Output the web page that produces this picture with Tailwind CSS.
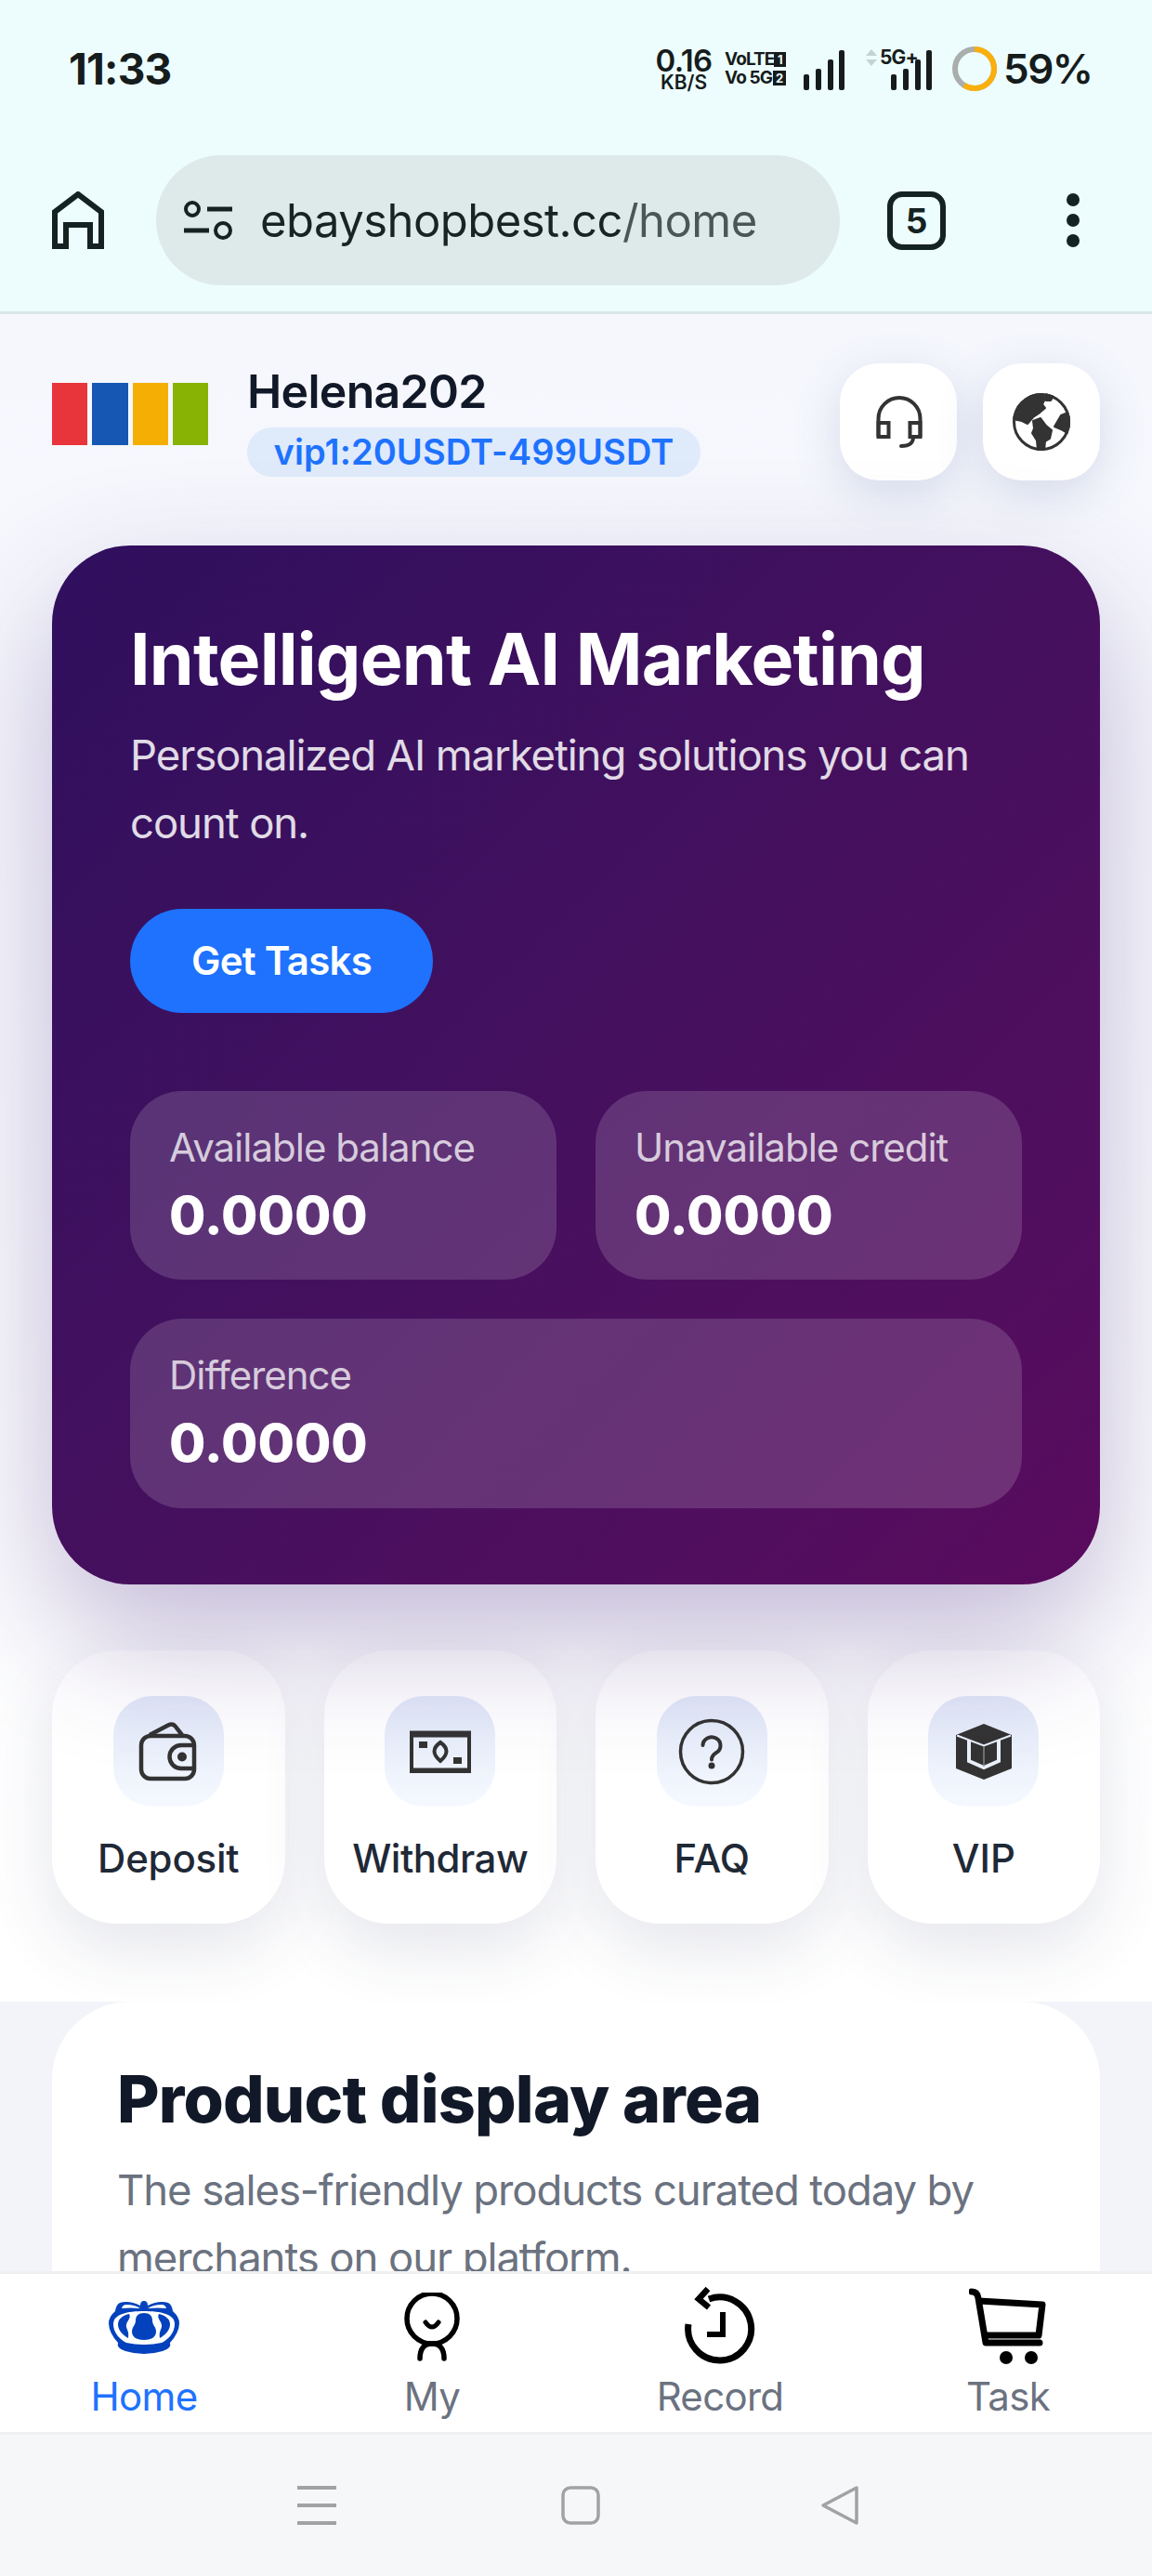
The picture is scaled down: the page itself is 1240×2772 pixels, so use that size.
<!DOCTYPE html>
<html lang="en">
<head>
<meta charset="utf-8">
<title>ebayshopbest</title>
<script src="https://cdn.jsdelivr.net/npm/@tailwindcss/browser@4"></script>
</head>
<body class="font-['Inter',sans-serif]">
<div class="w-[1240px] h-[2772px] overflow-hidden flex flex-col bg-white">

  <!-- browser chrome -->
  <header class="shrink-0 h-[338px] bg-[#edfdfd] border-b-[3px] border-[#d8e8e8] text-[#161c1c]">
    <div class="h-[148px] flex items-center pl-[74px] pr-[66px]">
      <span class="text-[46px] font-bold tracking-[-0.8px] leading-none">11:33</span>
      <div class="ml-auto flex items-center">
        <div class="w-[62px] flex flex-col items-center font-semibold">
          <span class="text-[33px] leading-[28px] tracking-[-0.6px]">0.16</span>
          <span class="text-[21px] leading-[18px] mt-[1px]">KB/S</span>
        </div>
        <div class="ml-[13px] w-[66px] flex flex-col font-bold text-[19px] leading-[20px] tracking-[-0.9px] whitespace-nowrap">
          <div class="flex items-center justify-between"><span>VoLTE</span><span class="w-[14px] h-[16px] bg-[#161c1c] text-[#edfdfd] text-[13px] leading-[16px] text-center tracking-normal">1</span></div>
          <div class="flex items-center justify-between"><span>Vo 5G</span><span class="w-[14px] h-[16px] bg-[#161c1c] text-[#edfdfd] text-[13px] leading-[16px] text-center tracking-normal">2</span></div>
        </div>
        <svg class="ml-[19px] mt-[2px]" width="44" height="44" viewBox="0 0 44 44" fill="#161c1c"><rect x="0" y="27" width="6" height="17" rx="2"/><rect x="13" y="21" width="6" height="23" rx="2"/><rect x="26" y="11" width="6" height="33" rx="2"/><rect x="38" y="1" width="6" height="43" rx="2"/></svg>
        <div class="relative ml-[23px] w-[71px] h-[44px] mt-[2px]">
          <svg class="absolute left-0 top-0" width="12" height="18" viewBox="0 0 12 18" fill="#c5d2d2"><path d="M6 0l6 7H0z"/><path d="M0 11h12l-6 7z"/></svg>
          <span class="absolute left-[15px] top-[-2px] text-[21px] leading-[22px] font-bold tracking-[-0.8px]">5G+</span>
          <svg class="absolute left-[27px] top-0" width="44" height="44" viewBox="0 0 44 44" fill="#161c1c"><rect x="0" y="27" width="6" height="17" rx="2"/><rect x="13" y="21" width="6" height="23" rx="2"/><rect x="26" y="11" width="6" height="33" rx="2"/><rect x="38" y="1" width="6" height="43" rx="2"/></svg>
        </div>
        <svg class="ml-[22px]" width="48" height="50" viewBox="0 0 48 50" fill="none"><circle cx="24" cy="25" r="21" stroke="#a9aeac" stroke-width="6"/><circle cx="24" cy="25" r="21" stroke="#fbaf0d" stroke-width="6" pathLength="100" stroke-dasharray="59 100" transform="rotate(-90 24 25)"/></svg>
        <span class="ml-[7px] w-[94px] text-[44px] font-semibold leading-none tracking-[-1.5px]">59%</span>
      </div>
    </div>
    <div class="flex items-start pt-[19px] pl-[56px]">
      <div class="h-[140px] flex items-center">
        <svg width="56" height="62" viewBox="0 0 56 62" fill="none" stroke="#142222" stroke-width="6"><path d="M3 59V22L28 3l25 19v37H41V36H15v23z"/></svg>
      </div>
      <div class="ml-[56px] w-[736px] h-[140px] rounded-full bg-[#deeae9] flex items-center pl-[30px]">
        <svg width="54" height="44" viewBox="0 0 54 44" fill="none" stroke="#142222"><circle cx="9" cy="10" r="7" stroke-width="4"/><path d="M25 10h27" stroke-width="5"/><path d="M0 33h27" stroke-width="5"/><circle cx="42" cy="33" r="8" stroke-width="4"/></svg>
        <span class="ml-[28px] text-[49px] leading-none tracking-[-0.55px] text-[#182423]">ebayshopbest.cc<span class="text-[#4b5756]">/home</span></span>
      </div>
      <div class="ml-[51px] h-[140px] flex items-center">
        <div class="w-[63px] h-[63px] rounded-[16px] border-[6px] border-[#142222] flex items-center justify-center text-[37px] font-bold leading-none text-[#142222]">5</div>
      </div>
      <div class="ml-[130px] h-[140px] flex flex-col items-center justify-center gap-[8px]">
        <span class="w-[14px] h-[14px] rounded-full bg-[#142222]"></span>
        <span class="w-[14px] h-[14px] rounded-full bg-[#142222]"></span>
        <span class="w-[14px] h-[14px] rounded-full bg-[#142222]"></span>
      </div>
    </div>
  </header>

  <!-- page -->
  <main class="flex-1 min-h-0 overflow-hidden">
    <section class="h-[1816px] bg-linear-to-b from-[#f5f7fd] to-white px-[56px] pt-[53px]">
      <div class="flex items-center h-[126px]">
        <div class="flex gap-[5px] w-[168px] h-[67px] mb-[17px]">
          <span class="flex-1 bg-[#e8343b]"></span>
          <span class="flex-1 bg-[#1757b4]"></span>
          <span class="flex-1 bg-[#f5ae03]"></span>
          <span class="flex-1 bg-[#89b304]"></span>
        </div>
        <div class="ml-[42px]">
          <div class="text-[50px] leading-[51px] font-semibold text-[#111827] tracking-[-0.7px]">Helena202</div>
          <div class="mt-[13px] h-[53px] w-[488px] rounded-full bg-[#dfeafb] flex items-center justify-center text-[38px] font-semibold text-[#1e72fe] tracking-[0.1px]">vip1:20USDT-499USDT</div>
        </div>
        <div class="ml-auto flex gap-[28px]">
          <div class="w-[126px] h-[126px] rounded-[42px] bg-white shadow-[0_14px_50px_rgba(70,90,150,0.18)] flex items-center justify-center">
            <svg width="60" height="60" viewBox="0 0 60 60" fill="none" stroke="#333" stroke-width="4"><path d="M8.5 46V26.5a22.5 22.5 0 0 1 45 0V46"/><rect x="8.5" y="31" width="11" height="15"/><rect x="42.5" y="31" width="11" height="15"/><path d="M46 46c0 7-4 10-13 10" stroke-linecap="round"/></svg>
          </div>
          <div class="w-[126px] h-[126px] rounded-[42px] bg-white shadow-[0_14px_50px_rgba(70,90,150,0.18)] flex items-center justify-center">
            <svg width="62" height="62" viewBox="0 0 62 62"><defs><clipPath id="globe"><circle cx="31" cy="31" r="31"/></clipPath></defs><circle cx="31" cy="31" r="29.5" fill="#fff" stroke="#333" stroke-width="3"/><g clip-path="url(#globe)" fill="#333" stroke="#333" stroke-width="2" stroke-linejoin="round"><path d="M0 28L6 12 20 2 32 0l3 6-3 6 3 4-7 6-6 4-6 7-6-3z"/><path d="M22 30l8-3 6 8 6 5-2 9-5 3-1 10h-7l-1-11-5-8 2-5z"/><path d="M62 20l-10 4-7 12 7 3 10 6z"/><path d="M36 1l8 2-3 5-5 0z"/></g></svg>
          </div>
        </div>
      </div>

      <div class="relative z-10 mt-[70px] h-[1118px] rounded-[84px] bg-linear-to-br from-[#2f0f5e] to-[#5a0b5e] px-[84px] pt-[84px] shadow-[0_56px_140px_rgba(60,25,120,0.3)]">
        <h1 class="text-[77px] leading-[77px] font-bold text-white tracking-[-0.8px]">Intelligent AI Marketing</h1>
        <p class="mt-[28px] text-[45.5px] leading-[73px] text-white/85 tracking-[-1.1px]">Personalized AI marketing solutions you can count on.</p>
        <div class="mt-[56px] w-[326px] h-[112px] pb-[2px] rounded-full bg-[#1e72fe] flex items-center justify-center text-[42px] font-semibold text-white tracking-[-0.7px]">Get Tasks</div>
        <div class="mt-[84px] grid grid-cols-2 gap-[42px]">
          <div class="h-[203px] rounded-[56px] bg-white/15 px-[42px] pt-[28px]">
            <div class="text-[42px] leading-[66px] text-white/75 tracking-[-1px]">Available balance</div>
            <div class="text-[57px] leading-[80px] font-extrabold text-white">0.0000</div>
          </div>
          <div class="h-[203px] rounded-[56px] bg-white/15 px-[42px] pt-[28px]">
            <div class="text-[42px] leading-[66px] text-white/75 tracking-[-1px]">Unavailable credit</div>
            <div class="text-[57px] leading-[80px] font-extrabold text-white">0.0000</div>
          </div>
          <div class="col-span-2 h-[204px] rounded-[56px] bg-white/15 px-[42px] pt-[28px]">
            <div class="text-[42px] leading-[66px] text-white/75 tracking-[-1px]">Difference</div>
            <div class="text-[57px] leading-[80px] font-extrabold text-white">0.0000</div>
          </div>
        </div>
      </div>

      <div class="mt-[71px] grid grid-cols-4 gap-[42px]">
        <div class="h-[294px] rounded-[70px] bg-white shadow-[0_28px_70px_rgba(50,60,100,0.12)] flex flex-col items-center pt-[49px]">
          <div class="w-[119px] h-[119px] rounded-[42px] bg-linear-to-b from-[#e1e8f8] to-[#f5f9ff] flex items-center justify-center">
            <svg width="68" height="68" viewBox="0 0 68 68" fill="none" stroke="#333" stroke-width="4.5"><rect x="5" y="17" width="57" height="46" rx="10"/><path d="M14 16L34 5.5q5-2.500 8 1.500L49 16" stroke-linejoin="round"/><path d="M62 27H48a12.500 12.500 0 0 0 0 25h14"/><circle cx="49" cy="39.500" r="5" fill="#333" stroke="none"/></svg>
          </div>
          <div class="mt-[28px] text-[42px] leading-[56px] font-medium text-[#1f2937] tracking-[-0.2px]">Deposit</div>
        </div>
        <div class="h-[294px] rounded-[70px] bg-white shadow-[0_28px_70px_rgba(50,60,100,0.12)] flex flex-col items-center pt-[49px]">
          <div class="w-[119px] h-[119px] rounded-[42px] bg-linear-to-b from-[#e1e8f8] to-[#f5f9ff] flex items-center justify-center">
            <svg width="66" height="46" viewBox="0 0 66 46" fill="none" stroke="#333" stroke-width="4"><rect x="2" y="3" width="62" height="41"/><path d="M0 4h66" stroke-width="7"/><path d="M0 43h66" stroke-width="5"/><path d="M33 13q13 9 0 20q-13-11 0-20z" stroke-width="4"/><rect x="10" y="12" width="9" height="7" fill="#333" stroke="none"/><rect x="47" y="29" width="9" height="7" fill="#333" stroke="none"/></svg>
          </div>
          <div class="mt-[28px] text-[42px] leading-[56px] font-medium text-[#1f2937] tracking-[-0.5px]">Withdraw</div>
        </div>
        <div class="h-[294px] rounded-[70px] bg-white shadow-[0_28px_70px_rgba(50,60,100,0.12)] flex flex-col items-center pt-[49px]">
          <div class="w-[119px] h-[119px] rounded-[42px] bg-linear-to-b from-[#e1e8f8] to-[#f5f9ff] flex items-center justify-center">
            <svg width="72" height="72" viewBox="0 0 72 72" fill="none" stroke="#333" stroke-width="3.5"><circle cx="36" cy="36" r="33.500"/><path d="M26.500 29a9.500 9 0 1 1 14.500 8q-5 3-5 7.500" stroke-width="4" stroke-linecap="round"/><circle cx="36" cy="51" r="3.500" fill="#333" stroke="none"/></svg>
          </div>
          <div class="mt-[28px] text-[42px] leading-[56px] font-medium text-[#1f2937]">FAQ</div>
        </div>
        <div class="h-[294px] rounded-[70px] bg-white shadow-[0_28px_70px_rgba(50,60,100,0.12)] flex flex-col items-center pt-[49px]">
          <div class="w-[119px] h-[119px] rounded-[42px] bg-linear-to-b from-[#e1e8f8] to-[#f5f9ff] flex items-center justify-center">
            <svg width="60" height="60" viewBox="0 0 60 60" fill="none"><path d="M30 0l30 12v36L30 60 0 48V12z" fill="#333"/><path d="M1 12.500L30 23.500l29-11" stroke="#eaf0fb" stroke-width="2"/><path d="M14 18v22l16 7 16-7V18" stroke="#eaf0fb" stroke-width="4"/><path d="M30 24v22" stroke="#999" stroke-width="1.200"/></svg>
          </div>
          <div class="mt-[28px] text-[42px] leading-[56px] font-medium text-[#1f2937]">VIP</div>
        </div>
      </div>
    </section>

    <section class="relative z-20 bg-[#f2f4f9] px-[56px] h-[400px]">
      <div class="h-[400px] rounded-t-[84px] bg-white px-[70px] pt-[63px]">
        <h2 class="text-[70px] leading-[84px] font-extrabold text-[#111827] tracking-[-0.8px]">Product display area</h2>
        <p class="mt-[19px] text-[45.5px] leading-[73px] text-[#6b7280] tracking-[-1.1px]">The sales-friendly products curated today by merchants on our platform.</p>
      </div>
    </section>
  </main>

  <!-- app tab bar -->
  <nav class="relative z-30 shrink-0 h-[176px] bg-white border-y-[3px] border-[#eef0f2] grid grid-cols-4 text-[42px] leading-[56px] text-[#6b7280] tracking-[-0.7px]">
    <div class="flex flex-col items-center pt-[12px]">
      <div class="h-[90px] flex items-center">
        <svg width="76" height="58" viewBox="0 0 76 58" fill="#0442bd"><path d="M38 1q4 0 4 5 12-6 22-3 4 2 5 9 7 6 7 13 0 10-10 21 2 6-8 9-10 3-20 3t-20-3q-10-3-8-9Q0 35 0 25q0-7 7-13 1-7 5-9 10-3 22 3 0-5 4-5z"/><path d="M14 9q1-4 5-4 9 0 15 4-11-1-20 0zM62 9q-1-4-5-4-9 0-15 4 11-1 20 0z" fill="#fff"/><path d="M5 26C5 15 20 12 38 12s33 3 33 14c0 10-8 17-14 20q-9 2-19 2t-19-2C13 43 5 36 5 26z" fill="#fff"/><path d="M10 26c0-5 4-9 12-11 3 5-4 8-3 14 1 4 3 5 2 12-7-4-11-9-11-15z"/><path d="M66 26c0-5-4-9-12-11-3 5 4 8 3 14-1 4-3 5-2 12 7-4 11-9 11-15z"/><path d="M38 14c6 0 9 3 9 8 0 5 4 7 4 12 0 5-4 9-13 9s-13-4-13-9c0-5 4-7 4-12 0-5 3-8 9-8z"/></svg>
      </div>
      <span class="mt-[2px] text-[#1e72fe]">Home</span>
    </div>
    <div class="flex flex-col items-center pt-[12px]">
      <div class="h-[90px] flex items-center">
        <svg width="60" height="74" viewBox="0 0 60 74" fill="none" stroke="#000" stroke-width="5.500" stroke-linecap="round"><circle cx="30" cy="28" r="27"/><path d="M23 32q7 10 14 0" stroke-width="5"/><path d="M17 71c0-11 5-16 13-16s13 5 13 16"/></svg>
      </div>
      <span class="mt-[2px]">My</span>
    </div>
    <div class="flex flex-col items-center pt-[12px]">
      <div class="h-[90px] flex items-center">
        <svg width="80" height="86" viewBox="0 0 80 86" fill="none" stroke="#000" stroke-width="7"><path d="M6 40a34 34 0 1 0 22-27"/><path d="M27 2L17 13l11 9" stroke-width="6.500"/><path d="M43 27v24H26" stroke-width="6"/></svg>
      </div>
      <span class="mt-[2px]">Record</span>
    </div>
    <div class="flex flex-col items-center pt-[12px]">
      <div class="h-[90px] flex items-center">
        <svg width="84" height="84" viewBox="0 0 84 84" fill="none" stroke="#000" stroke-width="7" stroke-linejoin="round"><path d="M3 4q6 0 7 7l8 48h58" stroke-linecap="round"/><path d="M11 14l68 4-4 33H19"/><circle cx="40" cy="75" r="7" fill="#000" stroke="none"/><circle cx="67" cy="75" r="7" fill="#000" stroke="none"/></svg>
      </div>
      <span class="mt-[2px]">Task</span>
    </div>
  </nav>

  <!-- system keys -->
  <div class="shrink-0 h-[152px] bg-[#f6f7f9] flex items-center pl-[320px]">
    <svg width="42" height="42" viewBox="0 0 42 42" fill="#a1a2a3"><rect y="0" width="42" height="4"/><rect y="19" width="42" height="4"/><rect y="38" width="42" height="4"/></svg>
    <svg class="ml-[242px]" width="42" height="42" viewBox="0 0 42 42" fill="none" stroke="#a1a2a3" stroke-width="3.500"><rect x="2" y="2" width="38" height="38" rx="8"/></svg>
    <svg class="ml-[237px]" width="42" height="44" viewBox="0 0 42 44" fill="none" stroke="#a1a2a3" stroke-width="3.500" stroke-linejoin="round"><path d="M39 3v38L3 22z"/></svg>
  </div>
</div>
</body>
</html>
